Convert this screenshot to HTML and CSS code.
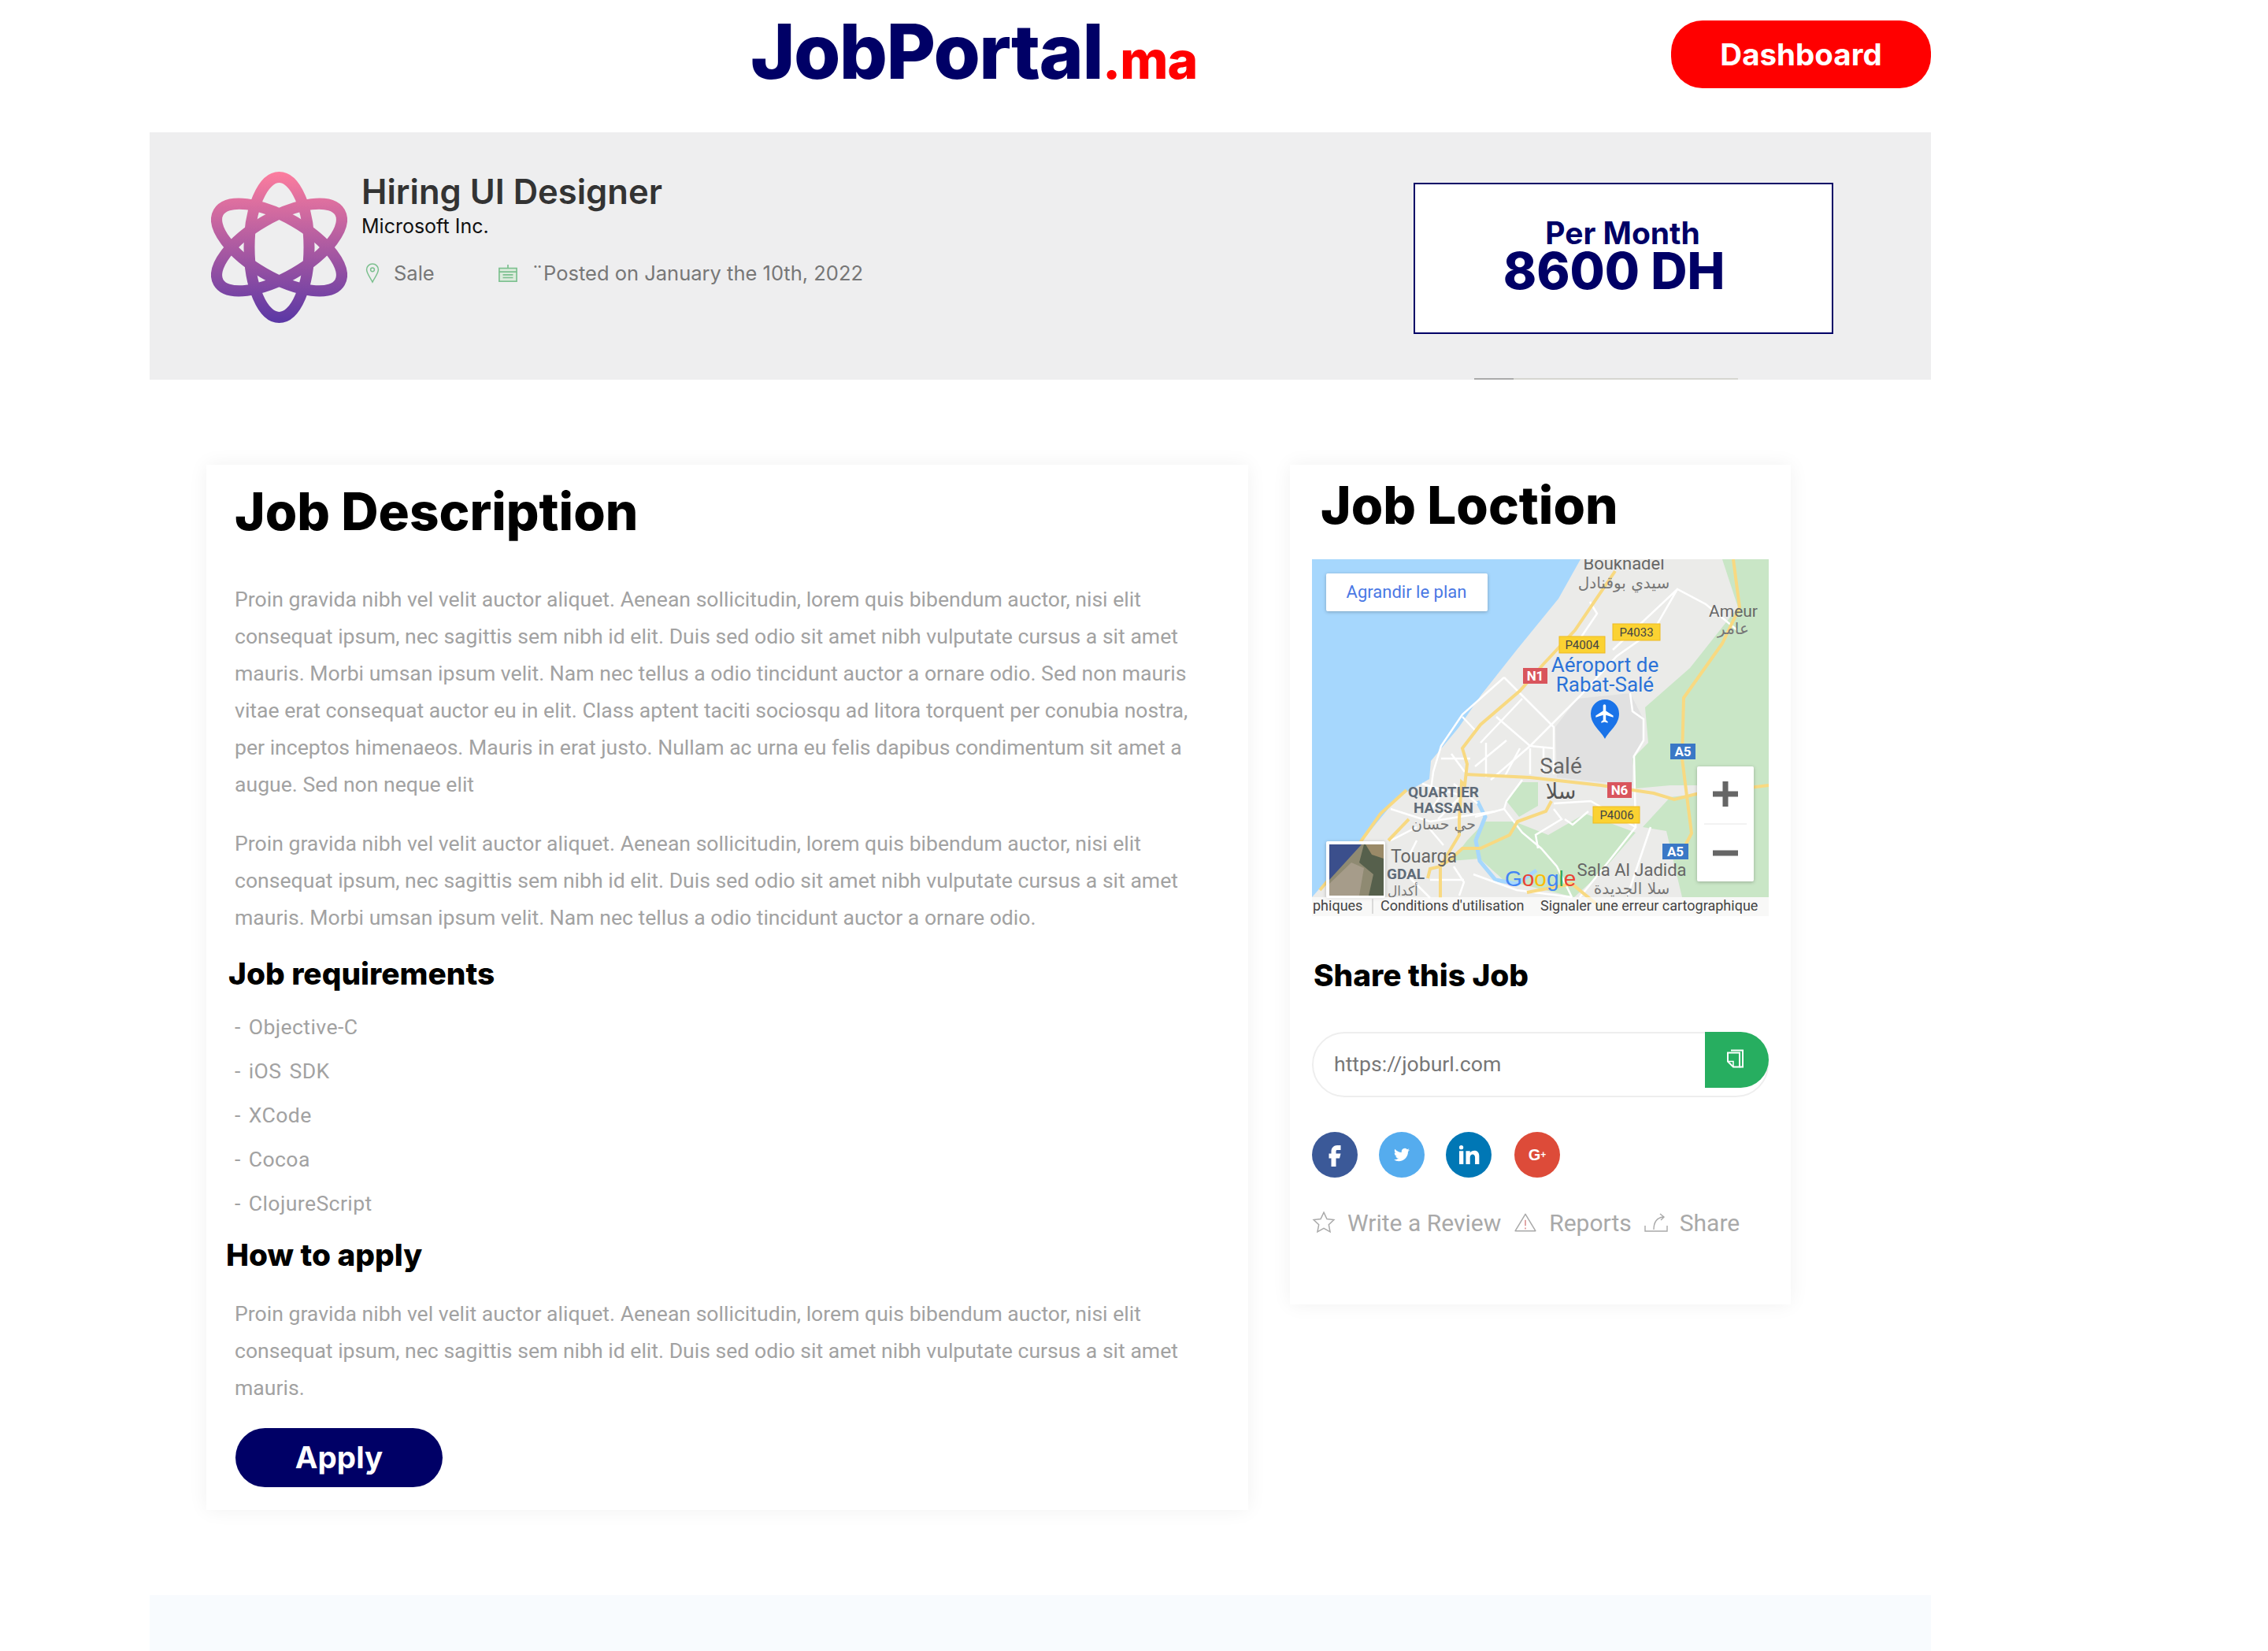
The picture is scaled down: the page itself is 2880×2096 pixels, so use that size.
FILE: index.html
```html
<!DOCTYPE html>
<html lang="en">
<head>
    <meta charset="UTF-8">
    <title>JobPortal.ma</title>
    <link rel="stylesheet" href="styles.css">
</head>
<body>
<div class="page">
    <!-- header -->
    <header class="top">
        <a class="brand" href="#">JobPortal<span class="brand-tld">.ma</span></a>
        <a class="btn-dash" href="#">Dashboard</a>
    </header>

    <!-- job banner -->
    <section class="hero">
        <svg class="hero-logo" viewBox="0 0 173 192" width="173" height="192" fill="none">
            <defs>
                <linearGradient id="atom" gradientUnits="userSpaceOnUse" x1="0" y1="0" x2="0" y2="192">
                    <stop offset="0" stop-color="#fd7d9e"/>
                    <stop offset="1" stop-color="#5a37a5"/>
                </linearGradient>
            </defs>
            <g stroke="url(#atom)" stroke-width="14">
                <path d="M86.500 7A89 38 90 1 1 86.500 185A89 38 90 1 1 86.500 7Z"/>
                <path d="M9.400 51.500A89 38 30 1 1 163.600 140.500A89 38 30 1 1 9.400 51.500Z"/>
                <path d="M163.600 51.500A89 38 150 1 1 9.400 140.500A89 38 150 1 1 163.600 51.500Z"/>
            </g>
        </svg>
        <div class="hero-info">
            <h1 class="hero-title">Hiring UI Designer</h1>
            <p class="hero-company">Microsoft Inc.</p>
            <div class="hero-meta">
                <span class="meta-item meta-place">
                    <svg class="meta-icon" viewBox="0 0 20 28" width="20" height="26" fill="none" stroke="#7cc08f" stroke-width="1.600">
                        <path d="M10 26C6 18 2 14 2 9a8 8 0 0 1 16 0c0 5-4 9-8 17z"/>
                        <circle cx="10" cy="9" r="2.600"/>
                    </svg>
                    Sale
                </span>
                <span class="meta-item">
                    <svg class="meta-icon" viewBox="0 0 26 26" width="26" height="24" fill="none" stroke="#7cc08f" stroke-width="1.800">
                        <rect x="1" y="6" width="24" height="18" fill="#dcebdc"/>
                        <path d="M1 11h24M13 1v5M6 15h14M6 19h14"/>
                    </svg>
                    ¨Posted on January the 10th, 2022
                </span>
            </div>
        </div>
        <div class="salary">
            <span class="salary-label">Per Month</span>
            <strong class="salary-value">8600 DH</strong>
        </div>
        <span class="hero-strip"></span>
    </section>

    <div class="content">
        <!-- left column -->
        <main class="card job-card">
            <h2 class="card-title">Job Description</h2>
            <p class="copy first">Proin gravida nibh vel velit auctor aliquet. Aenean sollicitudin, lorem quis bibendum auctor, nisi elit<br>consequat ipsum, nec sagittis sem nibh id elit. Duis sed odio sit amet nibh vulputate cursus a sit amet<br>mauris. Morbi umsan ipsum velit. Nam nec tellus a odio tincidunt auctor a ornare odio. Sed non mauris<br>vitae erat consequat auctor eu in elit. Class aptent taciti sociosqu ad litora torquent per conubia nostra,<br>per inceptos himenaeos. Mauris in erat justo. Nullam ac urna eu felis dapibus condimentum sit amet a<br>augue. Sed non neque elit</p>
            <p class="copy second">Proin gravida nibh vel velit auctor aliquet. Aenean sollicitudin, lorem quis bibendum auctor, nisi elit<br>consequat ipsum, nec sagittis sem nibh id elit. Duis sed odio sit amet nibh vulputate cursus a sit amet<br>mauris. Morbi umsan ipsum velit. Nam nec tellus a odio tincidunt auctor a ornare odio.</p>
            <h4 class="sub-title req-title">Job requirements</h4>
            <ul class="req-list">
                <li>- Objective-C</li>
                <li>- iOS SDK</li>
                <li>- XCode</li>
                <li>- Cocoa</li>
                <li>- ClojureScript</li>
            </ul>
            <h4 class="sub-title apply-title">How to apply</h4>
            <p class="copy third">Proin gravida nibh vel velit auctor aliquet. Aenean sollicitudin, lorem quis bibendum auctor, nisi elit<br>consequat ipsum, nec sagittis sem nibh id elit. Duis sed odio sit amet nibh vulputate cursus a sit amet<br>mauris.</p>
            <a class="btn-apply" href="#">Apply</a>
        </main>

        <!-- right column -->
        <aside class="card side-card">
            <h2 class="card-title side-title">Job Loction</h2>

            <svg class="map" viewBox="0 0 580 453" width="580" height="453">
                <rect width="580" height="453" fill="#ebebe9"/>
                <path d="M0 0H341L313 50 260 115 215 172 186 214 151 256 149 279 109 302 68 352 0 429Z" fill="#a6d7fd"/>
                <path d="M521 0H580V287H455L411 291 407 253 427 233 423 188 480 138 541 61Z" fill="#c9e6c6"/>
                <path d="M177 383 197 357 220 333 257 333 300 350 347 323 411 347 367 398 333 429 243 407 213 380Z" fill="#c9e6c6"/>
                <path d="M247 307 267 283 287 283 287 313 263 327Z" fill="#c9e6c6"/>
                <path d="M455 302 580 287V429H470L450 345 420 340Z" fill="#c9e6c6"/>
                <path d="M309 213 337 177 404 170 421 203 421 230 407 250 407 287 311 277Z" fill="#e1e1e1"/>
                <path class="map-river" d="M210 307 220 327 208 357 213 383 233 407 260 412 285 395"/>
                <g class="map-streets">
                    <path d="M244 150 191 197 164 237 154 270 150 300"/>
                    <path d="M244 150 304 210M191 200 207 217M267 173 307 213 307 273M234 200 277 237 307 240"/>
                    <path d="M214 233 267 177M341 173 277 237 227 280M247 230 207 263M221 233 221 277"/>
                    <path d="M277 240 277 273M294 240 294 273M264 240 244 277M164 253 201 253M177 247 194 270"/>
                    <path d="M404 170 407 193 421 203 421 230 409 250 411 340 374 387 340 429"/>
                    <path d="M244 317 267 347 291 367 311 390 330 429M267 280 247 307 244 317 207 327"/>
                    <path d="M307 310 354 307 411 340M307 317 317 330 284 350 287 367M321 330 331 337 351 320"/>
                    <path d="M341 173 387 123 434 90 464 38 500 57 540 90M464 38 382 115M353 54 362 69 341 100"/>
                    <path d="M100 317 150 333 187 327 233 320M133 357 123 377M150 343 167 363M180 390 193 410 187 427"/>
                    <path d="M150 407 193 407M100 357 133 340M140 285 190 300 160 330M170 290 150 320M180 285 210 310"/>
                    <path d="M120 400 150 430M205 400 260 420 330 429M430 340 400 429"/>
                </g>
                <g class="map-roads">
                    <path d="M385 15 334 90 294 133 264 167 214 210 191 240 197 260 194 287 190 283 187 330 187 350 163 390 163 430"/>
                    <path d="M194 273 277 277 367 287 434 297 460 305 488 298 580 287"/>
                    <path d="M535 0 543 61 521 107 472 176 470 253 482 348 472 367"/>
                    <path d="M304 307 297 320 261 333 251 350 214 367 191 367 177 380 163 390 150 393 147 405"/>
                    <path d="M120 293 87 323 63 357 10 420"/>
                    <path d="M123 330 97 357"/>
                    <path d="M273 423 330 412 370 445"/>
                </g>

                <text class="map-label" x="396" y="13" text-anchor="middle" font-size="22">Bouknadel</text>
                <text class="map-arabic" x="396" y="37" text-anchor="middle" font-size="20">سيدي بوقنادل</text>
                <text class="map-label" x="535" y="73" text-anchor="middle" font-size="21">Ameur</text>
                <text class="map-arabic" x="535" y="95" text-anchor="middle" font-size="20">عامر</text>
                <text class="map-air" x="372" y="143" text-anchor="middle">Aéroport de</text>
                <text class="map-air" x="372" y="168" text-anchor="middle">Rabat-Salé</text>
                <text class="map-label" x="316" y="272" text-anchor="middle" font-size="28">Salé</text>
                <text class="map-arabic map-dark" x="316" y="304" text-anchor="middle" font-size="27">سلا</text>
                <text class="map-district" x="167" y="302" text-anchor="middle">QUARTIER</text>
                <text class="map-district" x="167" y="322" text-anchor="middle">HASSAN</text>
                <text class="map-arabic" x="167" y="343" text-anchor="middle" font-size="19">حي حسان</text>
                <text class="map-label" x="100" y="385" font-size="23">Touarga</text>
                <text class="map-district" x="95" y="406" font-size="17">GDAL</text>
                <text class="map-arabic" x="96" y="427" font-size="17">أكدال</text>
                <text class="map-label" x="406" y="402" text-anchor="middle" font-size="22">Sala Al Jadida</text>
                <text class="map-arabic" x="406" y="425" text-anchor="middle" font-size="20">سلا الجديدة</text>

                <g class="shield-yellow">
                    <rect x="314" y="98" width="58" height="21"/>
                    <rect x="382" y="82" width="60" height="21"/>
                    <rect x="357" y="314" width="59" height="21"/>
                </g>
                <g class="shield-yellow-text" text-anchor="middle">
                    <text x="343" y="114">P4004</text>
                    <text x="412" y="98">P4033</text>
                    <text x="387" y="330">P4006</text>
                </g>
                <g class="shield-colored" text-anchor="middle">
                    <rect x="268" y="138" width="31" height="20" fill="#d9555c"/>
                    <rect x="375" y="283" width="31" height="20" fill="#d9555c"/>
                    <rect x="455" y="234" width="32" height="20" fill="#3a78c6"/>
                    <rect x="445" y="361" width="33" height="20" fill="#3a78c6"/>
                    <text x="283.500" y="154">N1</text>
                    <text x="390.500" y="299">N6</text>
                    <text x="471" y="250">A5</text>
                    <text x="461.500" y="377">A5</text>
                </g>

                <!-- airport pin -->
                <path d="M372 228C366 217 354 210 354 196a18 18 0 0 1 36 0C390 210 378 217 372 228Z" fill="#1a73e8"/>
                <path transform="translate(358 182) scale(1.170)" d="M21 16v-2l-8-5V3.500c0-.83-.67-1.500-1.500-1.500S10 2.670 10 3.500V9l-8 5v2l8-2.500V19l-2 1.500V22l3.500-1 3.500 1v-1.500L13 19v-5.500l8 2.500z" fill="#fff"/>

                <!-- expand button -->
                <rect class="map-panel" x="18" y="18" width="205" height="48" rx="2"/>
                <text class="map-expand" x="120" y="49" text-anchor="middle">Agrandir le plan</text>

                <!-- zoom buttons -->
                <rect class="map-panel" x="489" y="263" width="72" height="146" rx="2"/>
                <path d="M525 282V314M509 298H541M509 373H541" stroke="#666" stroke-width="7" fill="none"/>
                <path d="M498 336H552" stroke="#e6e6e6" stroke-width="1"/>

                <!-- satellite thumb -->
                <rect class="map-panel" x="18" y="358" width="75" height="72" rx="2"/>
                <rect x="22" y="362" width="69" height="65" fill="#8f8a72"/>
                <path d="M22 362H63L22 407Z" fill="#3b4f8c"/>
                <path d="M22 427V412L50 385 66 392 60 427Z" fill="#a69c8a"/>
                <path d="M66 362H91V427H72L78 400 60 385Z" fill="#56604c"/>
                <path d="M68 362H91V380L76 375Z" fill="#9a8a68"/>

                <text class="map-google" x="245" y="415"><tspan fill="#4285f4">G</tspan><tspan fill="#ea4335">o</tspan><tspan fill="#fbbc05">o</tspan><tspan fill="#4285f4">g</tspan><tspan fill="#34a853">l</tspan><tspan fill="#ea4335">e</tspan></text>

                <!-- attribution -->
                <rect x="0" y="429" width="580" height="24" fill="#fff" fill-opacity=".65"/>
                <path d="M77 431V450" stroke="#bbb" stroke-width="1"/>
                <g class="map-legal">
                    <text x="1" y="446">phiques</text>
                    <text x="87" y="446">Conditions d'utilisation</text>
                    <text x="290" y="446">Signaler une erreur cartographique</text>
                </g>
            </svg>

            <h4 class="sub-title share-title">Share this Job</h4>
            <div class="share-link">
                <span class="share-url">https://joburl.com</span>
                <a class="share-copy" href="#">
                    <svg viewBox="0 0 21 24" width="21" height="24" fill="none" stroke="#fff" stroke-width="2">
                        <path d="M5 1.500H20V22.500H16"/>
                        <path d="M1 4.500H16V22.500H8L1 15.500Z"/>
                        <path d="M8 22.500V15.500H1" stroke-width="1.500"/>
                    </svg>
                </a>
            </div>
            <div class="social">
                <a class="social-btn fb" href="#"><svg viewBox="0 0 24 24" width="36" height="36"><path d="M14 8h3V4h-3c-2.800 0-5 2.200-5 5v2H7v4h2v7h4v-7h3l1-4h-4V9c0-.6.4-1 1-1z" fill="#fff"/></svg></a>
                <a class="social-btn tw" href="#"><svg viewBox="0 0 24 24" width="20" height="20"><path d="M23.953 4.570a10 10 0 01-2.825.775 4.958 4.958 0 002.163-2.723c-.951.555-2.005.959-3.127 1.184a4.920 4.920 0 00-8.384 4.482C7.690 8.095 4.067 6.130 1.640 3.162a4.822 4.822 0 00-.666 2.475c0 1.710.870 3.213 2.188 4.096a4.904 4.904 0 01-2.228-.616v.060a4.923 4.923 0 003.946 4.827 4.996 4.996 0 01-2.212.085 4.936 4.936 0 004.604 3.417 9.867 9.867 0 01-6.102 2.105c-.390 0-.779-.023-1.170-.067a13.995 13.995 0 007.557 2.209c9.053 0 13.998-7.496 13.998-13.985 0-.210 0-.420-.015-.630A9.935 9.935 0 0024 4.590z" fill="#fff"/></svg></a>
                <a class="social-btn in" href="#"><svg viewBox="0 0 24 24" width="32" height="32"><path d="M6.940 5a2 2 0 1 1-4-.002 2 2 0 0 1 4 .002zM7 8.480H3V21h4V8.480zm6.320 0H9.340V21h3.940v-6.570c0-3.660 4.770-4 4.770 0V21H22v-7.930c0-6.170-7.060-5.940-8.720-2.910l.040-1.680z" fill="#fff"/></svg></a>
                <a class="social-btn gp" href="#">G<span class="gp-plus">+</span></a>
            </div>
            <div class="actions">
                <svg viewBox="0 0 28 28" width="30" height="30" fill="none" stroke="#a9a9a9" stroke-width="1.400"><path d="M14 2l3.700 7.800 8.300 1-6.100 5.800 1.600 8.400L14 20.900 6.500 25l1.600-8.400L2 10.800l8.300-1z"/></svg>
                <span class="action-text action-review">Write a Review</span>
                <svg viewBox="0 0 28 24" width="30" height="26" fill="none" stroke="#a9a9a9" stroke-width="1.400"><path d="M14 2 26 22H2Z" stroke-linejoin="round"/><path d="M14 9v7M14 18v2" stroke="#d98a8a"/></svg>
                <span class="action-text action-reports">Reports</span>
                <svg viewBox="0 0 30 26" width="30" height="26" fill="none" stroke="#a9a9a9" stroke-width="1.400"><path d="M1 17v7h28v-7M12 22C12 12 16 7 24 6M20 2l5 4-4 4"/></svg>
                <span class="action-text">Share</span>
            </div>
        </aside>
    </div>

    <div class="band"></div>
</div>
</body>
</html>
```

FILE: styles.css
```css
* {
    margin: 0;
    padding: 0;
    box-sizing: border-box;
}

body {
    background-color: #fff;
    font-family: Roboto, "Liberation Sans", sans-serif;
    overflow: hidden;
}

a {
    text-decoration: none;
}

.page {
    width: 2262px;
    margin-left: 190px;
}

/* header */
.top {
    height: 168px;
    display: flex;
    align-items: flex-start;
    justify-content: space-between;
    padding-left: 763px;
}

.brand {
    font-family: Inter, sans-serif;
    font-weight: 800;
    font-size: 96px;
    line-height: 130px;
    letter-spacing: -1.600px;
    color: #000066;
}

.brand-tld {
    font-size: 66px;
    letter-spacing: -1px;
    color: #ff0000;
}

.btn-dash {
    width: 330px;
    height: 86px;
    margin-top: 26px;
    border-radius: 40px;
    background-color: #ff0000;
    color: #fff;
    font-family: Inter, sans-serif;
    font-weight: 700;
    font-size: 38.500px;
    line-height: 86px;
    text-align: center;
}

/* banner */
.hero {
    position: relative;
    height: 314px;
    display: flex;
    align-items: flex-start;
    padding-left: 78px;
    background-color: #eeeeef;
}

.hero-logo {
    margin-top: 50px;
    flex: none;
}

.hero-info {
    width: 1354px;
    flex: none;
    padding: 48px 0 0 18px;
}

.hero-title {
    font-family: Inter, sans-serif;
    font-weight: 600;
    font-size: 43.500px;
    line-height: 54px;
    color: #333;
}

.hero-company {
    font-family: Inter, sans-serif;
    font-size: 25px;
    line-height: 34px;
    color: #111;
}

.hero-meta {
    display: flex;
    margin-top: 26px;
    padding-left: 4px;
    font-family: Inter, sans-serif;
    font-size: 25.500px;
    line-height: 34px;
    color: #777;
}

.meta-item {
    display: flex;
    align-items: center;
}

.meta-place {
    width: 169px;
}

.meta-icon {
    margin-right: 17px;
}

.salary {
    width: 533px;
    height: 192px;
    flex: none;
    margin-top: 64px;
    padding-top: 44px;
    border: 2px solid #000066;
    background-color: #fff;
    color: #000066;
    text-align: center;
    font-family: Inter, sans-serif;
}

.salary-label {
    display: block;
    font-weight: 700;
    font-size: 39px;
    line-height: 36px;
    margin-right: 2px;
}

.salary-value {
    display: block;
    font-weight: 800;
    font-size: 64px;
    line-height: 60px;
    margin-right: 24px;
}

/* thin leftover line on the banner's lower edge */
.hero-strip {
    position: absolute;
    left: 1682px;
    bottom: 0;
    width: 335px;
    height: 2px;
    background: linear-gradient(to right, #aaa 0, #aaa 15%, #d6d6d0 15%);
}

/* columns */
.content {
    display: flex;
    align-items: flex-start;
    gap: 53px;
    margin-top: 108px;
    padding-left: 72px;
}

.card {
    background-color: #fff;
    box-shadow: 0 0 24px rgba(0, 0, 0, .06);
}

.job-card {
    width: 1323px;
    height: 1327px;
    padding: 20px 36px 0;
}

.side-card {
    width: 636px;
    height: 1066px;
    padding: 12px 28px 0;
}

.card-title {
    font-family: Inter, sans-serif;
    font-weight: 800;
    font-size: 65.500px;
    line-height: 80px;
    color: #000;
}

.side-title {
    padding-left: 11px;
}

.copy {
    font-size: 26.600px;
    line-height: 47px;
    color: #a2a2a2;
    white-space: nowrap;
}

.copy.first {
    margin-top: 47px;
}

.copy.second {
    margin-top: 28px;
}

.copy.third {
    margin-top: 26px;
}

.sub-title {
    font-family: Inter, sans-serif;
    font-weight: 800;
    font-size: 38.800px;
    line-height: 50px;
    color: #000;
}

.req-title {
    margin: 23px 0 0 -8px;
}

.apply-title {
    margin: 12px 0 0 -11px;
}

.share-title {
    margin: 50px 0 0 2px;
}

.req-list {
    list-style: none;
    margin-top: 15px;
}

.req-list li {
    font-size: 26.600px;
    line-height: 56px;
    letter-spacing: .4px;
    word-spacing: 3px;
    color: #a2a2a2;
}

.btn-apply {
    display: block;
    width: 263px;
    height: 75px;
    margin: 28px 0 0 1px;
    border-radius: 38px;
    background-color: #000066;
    color: #fff;
    font-family: Inter, sans-serif;
    font-weight: 700;
    font-size: 38.500px;
    line-height: 75px;
    text-align: center;
}

/* map */
.map {
    display: block;
    margin-top: 28px;
    font-family: Roboto, sans-serif;
}

.map-streets path {
    fill: none;
    stroke: #fff;
    stroke-width: 2.500;
}

.map-roads path {
    fill: none;
    stroke: #f8d981;
    stroke-width: 4;
}

.map-river {
    fill: none;
    stroke: #a6d7fd;
    stroke-width: 5;
}

.map-label {
    fill: #666;
}

.map-arabic {
    font-family: "DejaVu Sans", sans-serif;
    fill: #777;
}

.map-dark {
    fill: #555;
}

.map-air {
    font-size: 26px;
    fill: #2a72d8;
}

.map-district {
    font-size: 19px;
    font-weight: 700;
    fill: #5f6b78;
}

.shield-yellow rect {
    fill: #fbd232;
    stroke: #eeb920;
}

.shield-yellow-text {
    font-size: 15px;
    fill: #444;
}

.shield-colored {
    font-size: 17px;
    font-weight: 700;
    fill: #fff;
}

.map-panel {
    fill: #fff;
    filter: drop-shadow(0 1px 2px rgba(0, 0, 0, .25));
}

.map-expand {
    font-size: 22px;
    fill: #4a78e4;
}

.map-google {
    font-family: "Liberation Sans", sans-serif;
    font-size: 28px;
}

.map-legal {
    font-size: 18px;
    fill: #444;
}

/* share */
.share-link {
    display: flex;
    justify-content: space-between;
    align-items: flex-start;
    height: 83px;
    margin-top: 47px;
    border: 2px solid #eeeeee;
    border-radius: 42px;
}

.share-url {
    padding-left: 26px;
    font-size: 26.600px;
    line-height: 78px;
    color: #777;
}

.share-copy {
    width: 81px;
    height: 71px;
    margin: -2px -2px 0 0;
    padding: 0 4px 4px 0;
    display: flex;
    align-items: center;
    justify-content: center;
    border-radius: 0 38px 38px 0;
    background-color: #27ae60;
}

.social {
    display: flex;
    margin-top: 44px;
}

.social-btn {
    width: 58px;
    height: 58px;
    margin-right: 27px;
    display: flex;
    align-items: center;
    justify-content: center;
    border-radius: 50%;
    color: #fff;
}

.fb {
    background-color: #3b5998;
}

.tw {
    background-color: #55acee;
}

.in {
    background-color: #0077b5;
}

.gp {
    margin-left: 2px;
    background-color: #dd4b39;
    font-family: "Liberation Sans", sans-serif;
    font-weight: 700;
    font-size: 20px;
}

.gp-plus {
    font-size: 12px;
}

.actions {
    display: flex;
    align-items: center;
    height: 40px;
    margin-top: 37px;
}

.action-text {
    margin-left: 15px;
    font-size: 30px;
    color: #a9a9a9;
}

.action-review {
    margin-right: 16px;
}

.action-reports {
    margin-right: 16px;
}

/* bottom band */
.band {
    height: 71px;
    margin-top: 108px;
    background-color: #f8fbfe;
}
```
